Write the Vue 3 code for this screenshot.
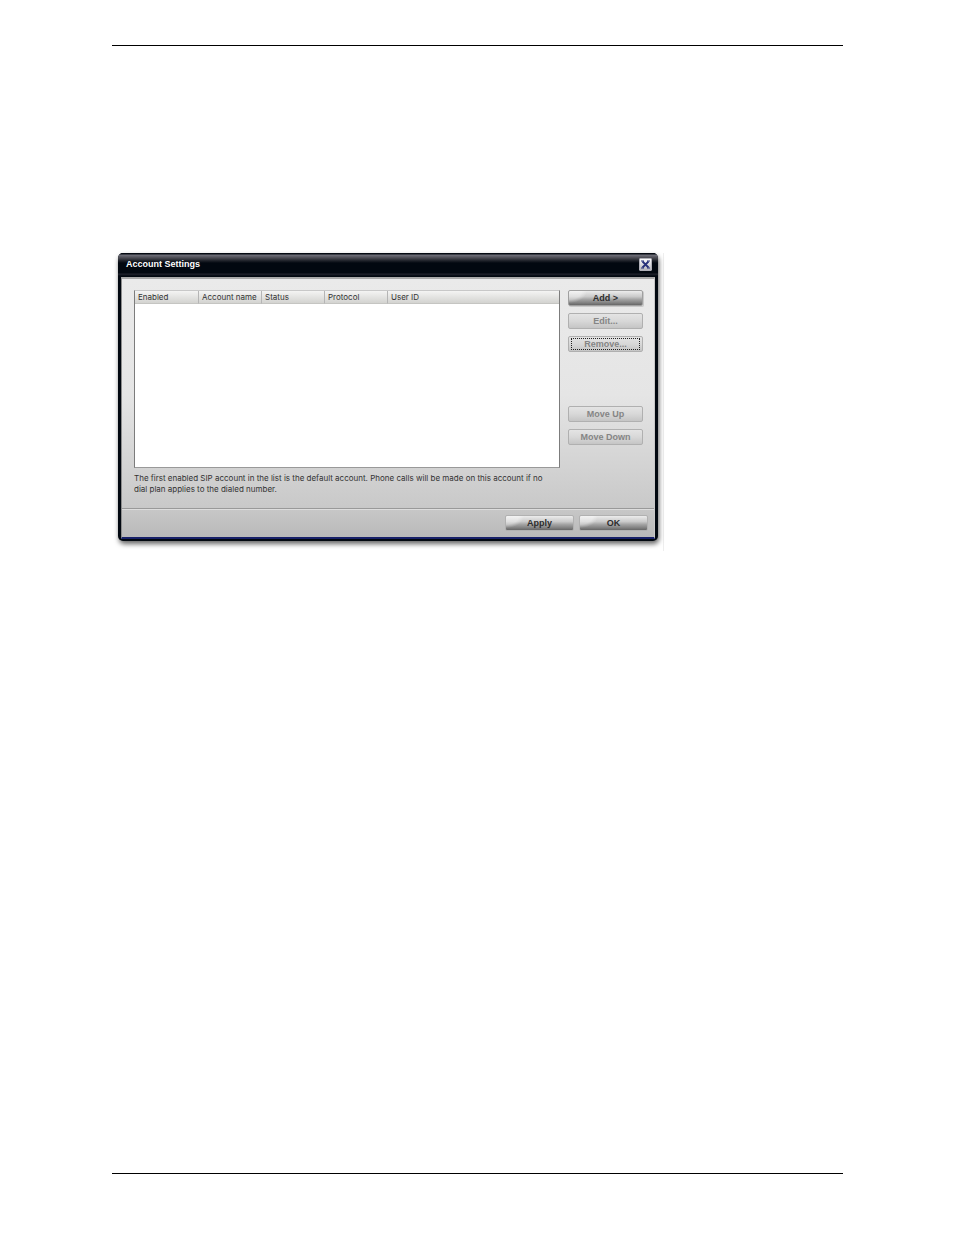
<script setup>
import { ref } from 'vue'

const columns = ['Enabled', 'Account name', 'Status', 'Protocol', 'User ID']
const accounts = ref([])
</script>

<template>
  <div class="page">
    <main class="sheet">
      <div class="figure">
        <section class="dialog" role="dialog" aria-labelledby="dialog-title">
          <header class="titlebar">
            <h1 id="dialog-title">Account Settings</h1>
            <button class="close" type="button" aria-label="Close">
              <svg viewBox="0 0 9 9" width="9" height="9" aria-hidden="true">
                <path d="M1.500 1.500l6 6M7.500 1.500l-6 6" fill="none" stroke="#26307a" stroke-width="1.800" />
                <path d="M0 1h3M6 1h3M0 8h3M6 8h3" fill="none" stroke="#26307a" />
              </svg>
            </button>
          </header>
          <div class="client">
            <div class="content">
              <div class="list">
                <table>
                  <colgroup>
                    <col class="narrow" /><col class="narrow" /><col class="narrow" /><col class="narrow" /><col />
                  </colgroup>
                  <thead>
                    <tr><th v-for="c in columns" :key="c" scope="col">{{ c }}</th></tr>
                  </thead>
                  <tbody>
                    <tr v-for="a in accounts" :key="a.id"><td v-for="c in columns" :key="c">{{ a[c] }}</td></tr>
                  </tbody>
                </table>
              </div>
              <div class="actions">
                <button class="btn strong framed" type="button">Add &gt;</button>
                <button class="btn muted" type="button" disabled>Edit...</button>
                <button class="btn muted focused" type="button" disabled><span>Remove...</span></button>
                <button class="btn muted move" type="button" disabled>Move Up</button>
                <button class="btn muted" type="button" disabled>Move Down</button>
              </div>
            </div>
            <p class="note">The first enabled SIP account in the list is the default account. Phone calls will be made on this account if no dial plan applies to the dialed number.</p>
            <footer class="footer">
              <button class="btn strong" type="button">Apply</button>
              <button class="btn strong" type="button">OK</button>
            </footer>
          </div>
        </section>
      </div>
    </main>
  </div>
</template>

<style>
body {
  background: #fff;
}
</style>

<style scoped>
* {
  box-sizing: border-box;
}
.page {
  display: flex;
  min-height: 100vh;
  padding: 45px 111px 61px 112px;
  font: 8px/12px Inter, "Liberation Sans", Arial, sans-serif;
  color: #333;
}
.sheet {
  flex: 1;
  min-width: 0;
  padding-top: 207px;
  border-top: 1px solid #000;
  border-bottom: 1px solid #000;
}
.figure {
  width: 100%;
  max-width: 552px;
  padding: 0 5px 10px 6px;
  border-right: 1px solid #eee;
}
.dialog {
  padding: 0 3px 2px;
  background: #020810;
  border-radius: 5px;
  box-shadow: 1px 3px 5px rgba(0, 0, 0, 0.6);
}
.titlebar {
  display: flex;
  align-items: flex-start;
  justify-content: space-between;
  height: 24px;
  margin: 0 -3px;
  padding: 5px 6px 0 8px;
  border-radius: 5px 5px 0 0;
  background: linear-gradient(#050a12 0 1px, #70707a 2px, #484850 5px, #1b1f26 8px, #020810 10px 20px, #22242e 21px, #020810 23px);
}
h1 {
  margin: 0;
  font: bold 9px/12px "Liberation Sans", Arial, sans-serif;
  color: #fff;
}
.close {
  display: flex;
  align-items: center;
  justify-content: center;
  width: 13px;
  height: 13px;
  padding: 0;
  border: 1px solid #b0b0b8;
  border-radius: 1px;
  background: linear-gradient(#fff, #b5b5bc);
}
.client {
  border: 1px solid #8d8d8d;
  border-top: 2px solid #aaa;
  border-bottom: 2px solid #172068;
  border-right-color: #c8c8c8;
  background: linear-gradient(#eaeaea, #e5e5e5 45%, #c9c9c9 88%, #b9b9b9);
}
.content {
  display: flex;
  gap: 8px;
  padding: 11px 11px 0 12px;
}
.list {
  flex: 1;
  height: 178px;
  min-width: 0;
  background: #fff;
  border: 1px solid #7c7c7c;
  border-top-color: #c8c8c8;
  border-bottom-color: #999;
}
table {
  width: 100%;
  table-layout: fixed;
  border-collapse: separate;
  border-spacing: 0;
}
.narrow {
  width: 63px;
}
th {
  height: 13px;
  padding: 0 0 0 3px;
  font-weight: normal;
  line-height: 12px;
  text-align: left;
  white-space: nowrap;
  border-bottom: 1px solid #c5c5c2;
  background: linear-gradient(#f4f4f3, #d3d3d0);
}
th:not(:first-child) {
  border-left: 1px solid #b5b5b5;
}
.actions {
  display: flex;
  flex-direction: column;
  gap: 7px;
  width: 75px;
}
.btn {
  height: 16px;
  padding: 0;
  border-radius: 2px;
  font: bold 9px/12px "Liberation Sans", Arial, sans-serif;
}
.strong {
  color: #2d2d2d;
  border: 1px solid #b1b1b1;
  background: radial-gradient(ellipse 18px 12px at 0 0, rgba(255, 255, 255, 0.4) 70%, transparent), linear-gradient(#ececec, #cacaca 40%, #a4a4a4 60%, #808080 85%, #666);
}
.framed {
  border: 1px solid #a0a0a0;
  box-shadow: 1px 1px 0 #c8c8c8;
}
.muted {
  color: #858585;
  border: 1px solid #b0b0b0;
  background: linear-gradient(#e4e4e4, #d8d8d8 50%, #c5c5c5);
}
.focused {
  padding: 1px 2px;
}
.focused span {
  display: flex;
  align-items: center;
  justify-content: center;
  height: 12px;
  border: 1px dotted #222;
}
.move {
  margin-top: 47px;
}
.note {
  min-height: 40px;
  margin: 0;
  padding: 5px 100px 0 12px;
  line-height: 11px;
}
.footer {
  display: flex;
  justify-content: flex-end;
  gap: 5px;
  padding: 6px;
  border-top: 1px solid #999;
  box-shadow: inset 0 1px 0 #ddd;
}
.footer .btn {
  width: 69px;
}
</style>
